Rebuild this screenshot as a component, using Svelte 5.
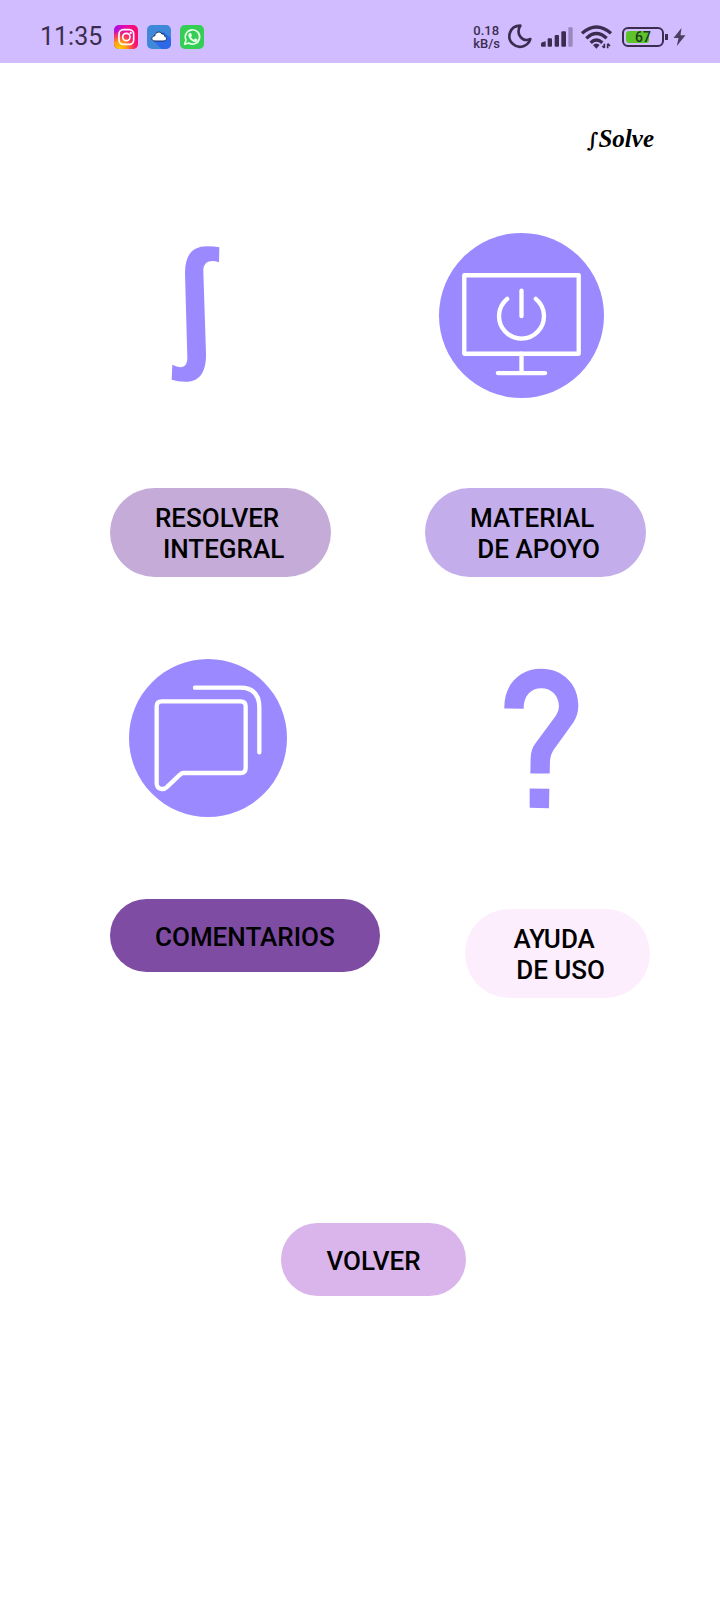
<script>
  const time = '11:35';
  const battery = 67;
</script>

<div class="screen">
  <div class="status">
    <span class="time">{time}</span>
    <div class="apps">
      <svg viewBox="0 0 72 72" width="24" height="24" aria-hidden="true">
        <defs>
          <linearGradient id="ig" x1="0" y1="0" x2="1" y2="0">
            <stop offset="0" stop-color="#a50cf0" />
            <stop offset="0.55" stop-color="#ee0c9c" />
            <stop offset="1" stop-color="#fb0a68" />
          </linearGradient>
          <radialGradient id="glow" cx="0.22" cy="1" r="0.85">
            <stop offset="0" stop-color="#ffd000" />
            <stop offset="0.35" stop-color="#ffa010" />
            <stop offset="0.7" stop-color="#ff3a50" stop-opacity="0.8" />
            <stop offset="1" stop-color="#f01090" stop-opacity="0" />
          </radialGradient>
        </defs>
        <rect width="72" height="72" rx="15" fill="url(#ig)" />
        <rect width="72" height="72" rx="15" fill="url(#glow)" />
        <g fill="none" stroke="#fff" stroke-width="5">
          <rect x="15" y="14" width="44" height="44" rx="13" />
          <circle cx="37" cy="36" r="11" />
        </g>
        <circle cx="50" cy="24" r="3.5" fill="#fff" />
      </svg>
      <svg viewBox="0 0 72 72" width="24" height="24" aria-hidden="true">
        <defs>
          <clipPath id="tile"><rect width="72" height="72" rx="15" /></clipPath>
        </defs>
        <g clip-path="url(#tile)">
          <rect width="72" height="72" fill="#3f87d9" />
          <path d="M18 45 L48 20 L72 40 V72 H44Z" fill="#2d68e8" />
        </g>
        <path d="M24 48 C11 48 12 33 23 33 C25 20 40 17 45 27 C51 26 53 29 53 34 C61 35 60 48 51 48Z" fill="#fff" stroke="#142c68" stroke-width="3" />
      </svg>
      <svg viewBox="0 0 72 72" width="24" height="24" aria-hidden="true">
        <rect width="72" height="72" rx="15" fill="#35ce55" />
        <path d="M14 58 L18 45 A21.500 21.500 0 1 1 26 54 Z" fill="none" stroke="#e9ffe9" stroke-width="5" stroke-linejoin="round" />
        <path d="M29 24 L33 24 L36 32 L33 36 Q36 42 42 44 L46 40 L53 44 Q52 51 44 51 C34 50 25 39 25 31 Q25 26 29 24Z" fill="#e9ffe9" />
      </svg>
    </div>
    <div class="system">
      <span class="speed">0.18<br />kB/s</span>
      <svg class="moon" viewBox="0 0 72 75" width="24" height="25" aria-hidden="true">
        <path d="M37 5 C4 5 -6 43 16 61 C34 77 62 65 67 45 C43 56 22 30 37 5Z" fill="none" stroke="#3c2d50" stroke-width="8" stroke-linejoin="round" />
      </svg>
      <svg class="signal" viewBox="0 0 96 60" width="32" height="20" aria-hidden="true">
        <g fill="#3c2d50">
          <path d="M0 51 Q0 47 4 46 L14 43 V59 H3 Q0 59 0 56Z" />
          <rect x="20" y="34" width="13" height="25" rx="3" />
          <rect x="41" y="24" width="13" height="35" rx="3" />
          <rect x="61" y="13" width="14" height="46" rx="3" />
        </g>
        <rect x="82" y="1" width="13" height="58" rx="3" fill="#9b87bd" />
      </svg>
      <svg class="wifi" viewBox="0 0 93 72" width="31" height="24" aria-hidden="true">
        <g fill="none" stroke="#3c2d50" stroke-width="10">
          <path d="M3 25 Q46 -13 90 25" />
          <path d="M16 40 Q46 11 77 40" />
          <path d="M29 53 Q46 37 64 53" />
        </g>
        <path d="M36 60 Q46 51 56 60 L46 71Z" fill="#3c2d50" />
        <path d="M70 56 V69 M70 69 L64 63 M80 70 V56 M80 56 L87 63" fill="none" stroke="#3c2d50" stroke-width="5" />
      </svg>
      <div class="battery"><span class="level" style:width="{battery}%"></span><span class="value">{battery}</span></div>
      <svg class="bolt" viewBox="0 0 38 54" width="13" height="18" aria-hidden="true">
        <path d="M25 0 L1 30 H16 L11 54 L37 22 H22Z" fill="#4d3f60" />
      </svg>
    </div>
  </div>

  <main>
    <h1><span class="sign">∫</span>Solve</h1>

    <div class="menu">
      <svg class="integral" viewBox="62 45 147 413" width="49" height="138" aria-hidden="true">
        <path d="M207 51 L206 96 C180 88 158 94 159 124 L167 370 C168 430 145 455 105 455 Q82 455 64 449 L66 404 Q80 411 90 411 C105 411 111 400 111 382 L104 130 C104 75 125 48 170 48 Q192 48 207 51Z" fill="#9b89ff" />
      </svg>
      <svg class="monitor" viewBox="55 38 496 496" width="165" height="165" aria-hidden="true">
        <circle cx="303" cy="286" r="248" fill="#9b89ff" />
        <g fill="none" stroke="#fff" stroke-width="13" stroke-linecap="round" stroke-linejoin="round">
          <rect x="131" y="165" width="344" height="236" />
          <path d="M303 401 V459 M232 459 H374 M303 211 V288" />
          <path d="M260 236 A67.500 67.500 0 1 0 346 236" />
        </g>
      </svg>

      <button class="resolver">{'RESOLVER \n INTEGRAL'}</button>
      <button class="material">{'MATERIAL \n DE APOYO'}</button>

      <svg class="chat" viewBox="27 26 474 474" width="158" height="158" aria-hidden="true">
        <circle cx="264" cy="263" r="237" fill="#9b89ff" />
        <g fill="none" stroke="#fff" stroke-width="13" stroke-linecap="round" stroke-linejoin="round">
          <path d="M125 153 H362 Q377 153 377 168 V353 Q377 368 362 368 H191 Q185 368 180 373 L142 409 Q134 417 125 416 Q110 414 110 399 V168 Q110 153 125 153Z" />
          <path d="M225 112 H360 Q418 112 418 172 V306" />
        </g>
      </svg>
      <svg class="question" viewBox="40 38 225 422" width="75" height="141" aria-hidden="true">
        <path d="M41 159 C39 84 90 40 151 40 C218 40 263 88 263 151 C263 171 257 187 248 201 L188 284 Q179 298 178 314 L177 354 H119 L120 307 Q121 281 134 264 L196 180 Q204 168 205 154 C205 120 182 98 152 98 C121 98 98 121 99 160Z M117 399 L176 400 L175 458 L117 457Z" fill="#9b89ff" />
      </svg>

      <button class="comentarios">COMENTARIOS</button>
      <button class="ayuda">{'AYUDA \n DE USO'}</button>
    </div>

    <div class="footer">
      <button class="volver">VOLVER</button>
    </div>
  </main>
</div>

<style>
  :global(body) {
    margin: 0;
    background: #fff;
  }

  .screen {
    min-height: 100vh;
    font-family: Roboto, "Liberation Sans", sans-serif;
    color: #000;
  }

  svg {
    display: block;
    flex: none;
  }

  .status {
    display: flex;
    align-items: center;
    height: 63px;
    padding: 10px 34px 0 40px;
    box-sizing: border-box;
    background: #d1bcff;
    color: #3c2d50;
  }

  .time {
    font-size: 25px;
    line-height: 28px;
    font-weight: 400;
  }

  .apps {
    display: flex;
    gap: 9px;
    margin-left: 12px;
  }

  .system {
    display: flex;
    align-items: center;
    margin-left: auto;
  }

  .speed {
    font-size: 13px;
    line-height: 13px;
    font-weight: 500;
  }

  .moon {
    margin-left: 8px;
  }

  .signal {
    margin-left: 9px;
  }

  .wifi {
    margin-left: 8px;
  }

  .battery {
    position: relative;
    display: flex;
    width: 42px;
    height: 20px;
    margin-left: 10px;
    padding: 2px;
    box-sizing: border-box;
    border: 2px solid #3c2d50;
    border-radius: 6px;
  }

  .battery::after {
    content: "";
    position: absolute;
    top: 5px;
    right: -6px;
    width: 3px;
    height: 6px;
    background: #3c2d50;
  }

  .level {
    border-radius: 3px;
    background: #5cc428;
  }

  .value {
    position: absolute;
    inset: 0;
    text-align: center;
    font-size: 14px;
    line-height: 17px;
    font-weight: 500;
    color: #1f3a20;
  }

  .bolt {
    margin-left: 9px;
  }

  main {
    padding: 61px 70px 80px 110px;
  }

  h1 {
    margin: 0 -4px 0 0;
    text-align: right;
    font: italic bold 25px/30px "Liberation Serif", serif;
  }

  .sign {
    font-family: "DejaVu Serif", serif;
    font-size: 20px;
    line-height: 20px;
  }

  .menu {
    display: grid;
    grid-template-columns: 7fr 5fr;
    row-gap: 82px;
    align-items: start;
    justify-items: start;
    margin-top: 79px;
  }

  .integral {
    margin: 12px 0 0 61px;
  }

  .monitor {
    margin: 0 0 8px 14px;
  }

  .chat {
    margin-left: 19px;
  }

  .question {
    margin: 9px 0 0 79px;
  }

  button {
    min-height: 73px;
    padding: 15px 45px 12px;
    border: 0;
    border-radius: 45px;
    font: 500 26px/31px Roboto, "Liberation Sans", sans-serif;
    text-align: center;
    white-space: pre;
    color: #000;
    cursor: pointer;
  }

  .resolver {
    background: #c5abd8;
  }

  .material {
    background: #c3aeeb;
  }

  .comentarios {
    background: #7e4ca2;
  }

  .ayuda {
    justify-self: end;
    margin-top: 10px;
    background: #fdeefe;
  }

  .volver {
    background: #d9b5eb;
  }

  .footer {
    display: flex;
    justify-content: center;
    margin: 225px 13px 0 0;
  }
</style>
